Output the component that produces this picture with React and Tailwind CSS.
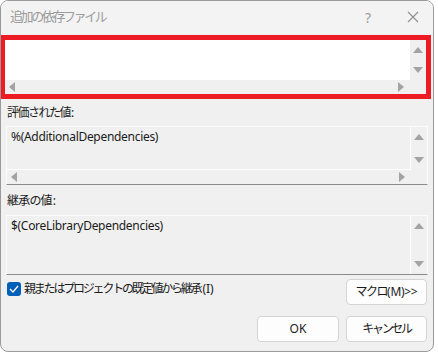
import React from 'react'

const FONT = "font-['Noto_Sans','Noto_Sans_CJK_JP',sans-serif]"

function Tri({ dir }) {
  const pts = {
    up: '0,7 5,1 10,7',
    down: '0,1 5,7 10,1',
    left: '7,0 1,5 7,10',
    right: '1,0 7,5 1,10',
  }[dir]
  const vertical = dir === 'up' || dir === 'down'
  return (
    <svg width={vertical ? 10 : 8} height={vertical ? 8 : 10} viewBox={vertical ? '0 0 10 8' : '0 0 8 10'}>
      <polygon points={pts} fill="#a3a3a3" />
    </svg>
  )
}

// text box with scroll bars, like a disabled win32 edit
function EditBox({ text, hScroll = true, height, white = false, outline = true }) {
  return (
    <div
      className={`flex flex-col ${outline ? 'border border-[#fbfbfb] border-b-[#8a8a8a]' : ''}`}
      style={{ height }}
    >
      <div className="flex flex-1 min-h-0">
        <div
          className={`flex-1 border-r ${hScroll ? 'border-b' : ''} ${white ? 'bg-white border-white' : 'bg-[#f0f0f0] border-[#fdfdfd]'} px-[4px] pt-[2px] text-[12px] tracking-[-0.3px] text-[#1b1b1b] leading-[16px]`}
        >
          {text}
        </div>
        <div className="w-[16px] flex flex-col items-center justify-between py-[6px] bg-[#f0f0f0]">
          <Tri dir="up" />
          <Tri dir="down" />
        </div>
      </div>
      {hScroll && (
        <div className="h-[14px] flex items-center justify-between pl-[3px] pr-[21px] bg-[#f0f0f0]">
          <Tri dir="left" />
          <Tri dir="right" />
        </div>
      )}
    </div>
  )
}

function Btn({ children, className = '' }) {
  return (
    <div className={`h-[26px] flex items-center justify-center bg-[#fdfdfd] border border-[#d4d4d4] rounded-[4px] text-[12px] text-[#1b1b1b] ${className}`}>
      {children}
    </div>
  )
}

export default function App() {
  return (
    <div className={`w-[438px] h-[354px] bg-white ${FONT}`}>
      <div className="w-[434px] h-[352px] bg-[#f0f0f0] border border-[#9a9a9a] rounded-[8px] overflow-hidden flex flex-col relative">
        {/* title bar */}
        <div className="h-[32px] shrink-0 flex items-center bg-[#f3f3f3]">
          <span className="pl-[9px] text-[13px] tracking-[-2.4px] text-[#9b9b9b] flex-1">追加の依存ファイル</span>
          <span className="text-[14px] text-[#9b9b9b] mr-[36px]">?</span>
          <svg width="12" height="12" viewBox="0 0 12 12" className="mr-[14px]">
            <path d="M1 1 L11 11 M11 1 L1 11" stroke="#8f8f8f" strokeWidth="1.1" />
          </svg>
        </div>

        {/* red-marked additional dependency box */}
        <div className="mt-[2px] -ml-px w-[431px] h-[64px] border-[5px] border-[#ed1c24]">
          <EditBox height={54} white outline={false} />
        </div>

        <div className="pl-[5px] pr-[5px]">
          <div className="h-[27px] flex items-center pl-[1px] text-[12px] text-[#1b1b1b]">
            <span className="tracking-[-1.5px]">評価された値</span>
            <span className="ml-[1px]">:</span>
          </div>
          <EditBox text="%(AdditionalDependencies)" height={59} />

          <div className="h-[30px] flex items-center pl-[1px] pt-[1px] text-[12px] text-[#1b1b1b]">
            <span className="tracking-[-0.8px]">継承の値</span>
            <span className="ml-[1px]">:</span>
          </div>
          <EditBox text="$(CoreLibraryDependencies)" height={60} hScroll={false} />

          <div className="flex items-start justify-between mt-[4px]">
            <div className="flex items-center gap-[3px] mt-[1px] pl-[1px]">
              <div className="w-[14px] h-[14px] rounded-[3px] bg-[#005fb8] flex items-center justify-center">
                <svg width="10" height="8" viewBox="0 0 10 8">
                  <path d="M1 4 L4 7 L9 1" stroke="white" strokeWidth="1.3" fill="none" />
                </svg>
              </div>
              <span className="text-[12px] text-[#1b1b1b]">
                <span className="tracking-[-2.2px]">親またはプロジェクトの既定値から継承</span>
                <span className="ml-[2px]">(I)</span>
              </span>
            </div>
            <Btn className="w-[81px] mr-[1px]">
              <span className="tracking-[-1.5px]">マクロ</span>
              <span className="tracking-[-0.3px]">(M)&gt;&gt;</span>
            </Btn>
          </div>

          <div className="flex justify-end gap-[7px] mt-[11px] mr-[1px]">
            <Btn className="w-[82px]">OK</Btn>
            <Btn className="w-[81px] tracking-[-2.3px]">キャンセル</Btn>
          </div>
        </div>
      </div>
    </div>
  )
}
